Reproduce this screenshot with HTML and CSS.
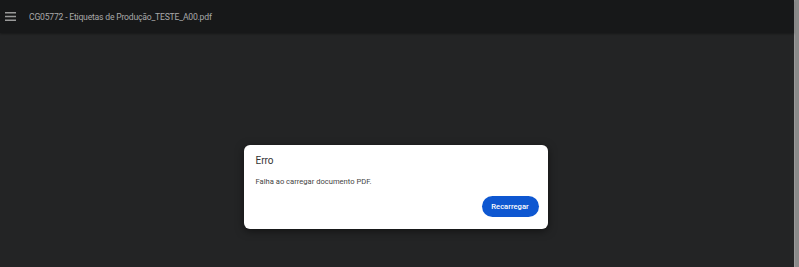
FILE: index.html
```html
<!DOCTYPE html>
<html lang="pt">
<head>
    <meta charset="utf-8">
    <title>CG05772 - Etiquetas de Produção_TESTE_A00.pdf</title>
    <link rel="stylesheet" href="styles.css">
</head>
<body>
    <div class="visor">
        <header class="barra">
            <svg class="menu" width="11" height="9" viewBox="0 0 11 9">
                <rect x="0" y="0" width="11" height="1.5" fill="#9a9a9a"/>
                <rect x="0" y="3.75" width="11" height="1.5" fill="#9a9a9a"/>
                <rect x="0" y="7.5" width="11" height="1.5" fill="#9a9a9a"/>
            </svg>
            <span class="titulo">CG05772 - Etiquetas de Produção_TESTE_A00.pdf</span>
        </header>

        <main class="area">
            <div class="dialogo">
                <h2 class="dialogo_titulo">Erro</h2>
                <p class="dialogo_texto">Falha ao carregar documento PDF.</p>
                <div class="acoes">
                    <button class="boton" type="button">Recarregar</button>
                </div>
            </div>
        </main>
    </div>
</body>
</html>
```

FILE: styles.css
```css
*{font-family: Roboto, "Noto Sans", sans-serif; box-sizing: border-box;}

html, body{margin: 0; height: 100%;}

body{background-color: #8a8a8a;}

.visor{
    width: 795px;
    height: 267px;
    background-color: #232425;
    border-right: 1px solid #9b9b9b;
    display: flex;
    flex-direction: column;
}

.barra{
    height: 33px;
    background-color: #171819;
    display: flex;
    align-items: center;
    padding-left: 5px;
    box-shadow: 0 1px 2px rgba(0,0,0,0.35);
}

.menu{margin-right: 13px;}

.titulo{
    color: #a9a9a9;
    font-size: 8.6px;
    letter-spacing: -0.2px;
}

.area{
    flex: 1;
    display: flex;
    justify-content: center;
    padding-top: 112px;
    padding-right: 3px;
}

.dialogo{
    width: 304px;
    height: 84px;
    background-color: white;
    border-radius: 6px;
    box-shadow: 0 2px 8px rgba(0,0,0,0.5);
    padding: 10px 9px 0 12px;
}

.dialogo_titulo{
    margin: 0;
    font-weight: normal;
    font-size: 10px;
    color: #333;
}

.dialogo_texto{
    margin: 11px 0 0 0;
    font-size: 7.6px;
    color: #444;
}

.acoes{
    display: flex;
    justify-content: flex-end;
    margin-top: 10px;
}

.boton{
    background-color: #0e57d1;
    color: white;
    border: none;
    border-radius: 11px;
    width: 57px;
    height: 21px;
    font-size: 7.6px;
    font-weight: 500;
    padding: 0;
}
```
